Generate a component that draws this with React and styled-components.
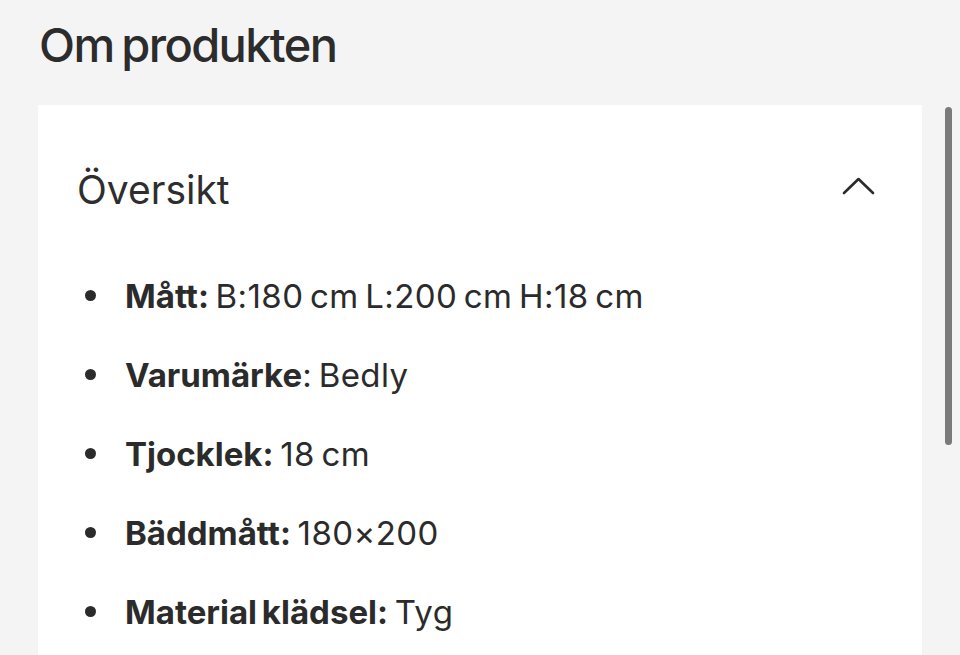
import styled, { createGlobalStyle } from 'styled-components';

const Global = createGlobalStyle`
  html, body {
    margin: 0;
    padding: 0;
    background: #f4f4f4;
    overflow: hidden;
  }
  body {
    font-family: Inter, "Liberation Sans", sans-serif;
    color: #2b2b2b;
  }
`;

const Page = styled.div`
  display: grid;
  grid-template-columns: 38px 884px 38px;
  width: 960px;
  height: 655px;
  overflow: hidden;
`;

const Main = styled.div`
  grid-column: 2;
  display: flex;
  flex-direction: column;
`;

const Title = styled.h1`
  margin: 0;
  padding: 16px 0 0 1px;
  height: 105px;
  box-sizing: border-box;
  font-size: 47px;
  line-height: 58px;
  font-weight: 500;
  letter-spacing: -0.035em;
  word-spacing: -3px;
  color: #2c2c2c;
`;

const Card = styled.section`
  background: #fff;
  flex: 1;
  padding: 54px 47px 0 39px;
`;

const Header = styled.div`
  display: flex;
  align-items: center;
  justify-content: space-between;
  height: 60px;

  svg {
    margin-bottom: 6px;
  }
`;

const SectionName = styled.h2`
  margin: 0;
  font-size: 39px;
  font-weight: 400;
  letter-spacing: 0;
  color: #2e2e2e;
`;

const List = styled.ul`
  list-style: none;
  margin: 0;
  padding: 37px 0 0 8px;
  display: flex;
  flex-direction: column;
`;

const Item = styled.li`
  display: flex;
  align-items: center;
  gap: 29px;
  height: 79px;
  font-size: 33px;
  letter-spacing: 0.012em;
  word-spacing: -3px;
  color: #2b2b2b;

  &::before {
    content: '';
    width: 11px;
    height: 11px;
    border-radius: 50%;
    background: #2b2b2b;
    flex: none;
  }

  b {
    font-weight: 700;
    letter-spacing: 0;
  }
`;

const Rail = styled.div`
  grid-column: 3;
  display: flex;
  justify-content: flex-end;
  padding: 107px 8px 0 0;
`;

const Thumb = styled.div`
  width: 7px;
  height: 338px;
  border-radius: 4px;
  background: #7a7a7a;
`;

const Chevron = () => (
  <svg width="33" height="20" viewBox="0 0 33 20" fill="none">
    <path d="M2 17 L16.5 3 L31 17" stroke="#2b2b2b" strokeWidth="2.6" strokeLinecap="round" strokeLinejoin="round" />
  </svg>
);

const specs = [
  ['Mått:', ' B:180 cm L:200 cm H:18 cm'],
  ['Varumärke', ': Bedly'],
  ['Tjocklek:', ' 18 cm'],
  ['Bäddmått:', ' 180×200'],
  ['Material klädsel:', ' Tyg'],
];

export default function App() {
  return (
    <>
      <Global />
      <Page>
        <Main>
          <Title>Om produkten</Title>
          <Card>
            <Header>
              <SectionName>Översikt</SectionName>
              <Chevron />
            </Header>
            <List>
              {specs.map(([k, v]) => (
                <Item key={k}>
                  <span><b>{k}</b>{v}</span>
                </Item>
              ))}
            </List>
          </Card>
        </Main>
        <Rail>
          <Thumb />
        </Rail>
      </Page>
    </>
  );
}
